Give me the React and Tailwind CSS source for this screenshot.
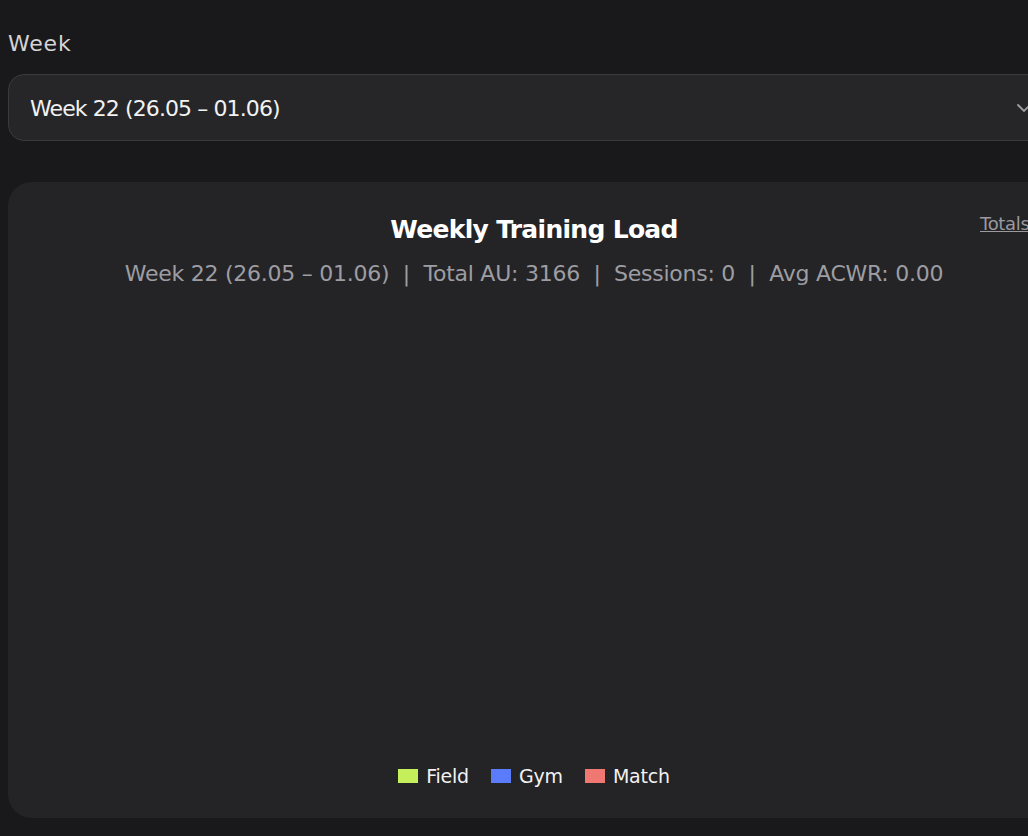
import React from "react";

export default function App() {
  return (
    <div
      className="w-[1028px] h-[836px] overflow-hidden bg-[#19191b]"
      style={{ fontFamily: '"DejaVu Sans", sans-serif' }}
    >
      <div className="w-[1052px] ml-[8px] pt-[30px]">
        <div className="text-[22px] leading-[28px] text-[#d4d4d6] tracking-[0.8px]">Week</div>
        <div className="mt-[16px] h-[67px] rounded-[16px] border border-[#3a3a3d] bg-[#262628] flex items-center justify-between pl-[21px] pr-[20px]">
          <span className="text-[22px] text-[#f2f2f2] tracking-[-0.9px] pt-[1px]">Week 22 (26.05 – 01.06)</span>
          <svg width="14" height="14" viewBox="0 0 14 14" fill="none" className="mr-[8px]">
            <path d="M1 4 L7 10 L13 4" stroke="#a0a0a4" strokeWidth="1.8" strokeLinecap="round" />
          </svg>
        </div>
        <div className="mt-[41px] h-[636px] rounded-[24px] bg-[#242426] relative flex flex-col">
          <a className="absolute left-[972px] top-[28px] text-[18px] text-[#9a9a9f] underline tracking-[-0.3px]">Totals</a>
          <div className="pt-[31px] text-center text-[25px] leading-[34px] font-bold text-white tracking-[-0.7px]">
            Weekly Training Load
          </div>
          <div className="mt-[12px] text-center text-[22px] leading-[30px] text-[#9d9da3] tracking-[-0.25px]">
            Week 22 (26.05 – 01.06)&nbsp;&nbsp;|&nbsp;&nbsp;Total AU: 3166&nbsp;&nbsp;|&nbsp;&nbsp;Sessions: 0&nbsp;&nbsp;|&nbsp;&nbsp;Avg ACWR: 0.00
          </div>
          <div className="flex-1" />
          <div className="flex justify-center items-center gap-[22px] pb-[28px] text-[19px] text-[#f2f2f2] tracking-[-0.2px]">
            <div className="flex items-center gap-[8px]">
              <span className="w-[20px] h-[14px] bg-[#c5f05c]" />
              <span>Field</span>
            </div>
            <div className="flex items-center gap-[8px]">
              <span className="w-[20px] h-[14px] bg-[#5b7cfa]" />
              <span>Gym</span>
            </div>
            <div className="flex items-center gap-[8px]">
              <span className="w-[20px] h-[14px] bg-[#f07872]" />
              <span>Match</span>
            </div>
          </div>
        </div>
      </div>
    </div>
  );
}
